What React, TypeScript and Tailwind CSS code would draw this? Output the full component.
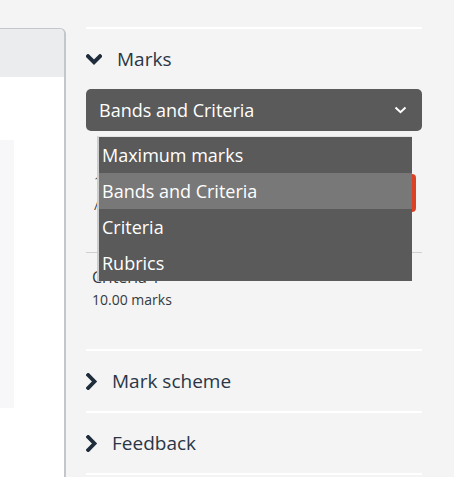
import React from "react";

const ChevronDown = () => (
  <svg width="16" height="11" viewBox="0 0 16 11" className="shrink-0">
    <polyline points="2,2.2 8,8.2 14,2.2" fill="none" stroke="#1e2c3c" strokeWidth="3.8" strokeLinecap="square" />
  </svg>
);

const ChevronRight = () => (
  <svg width="12" height="17" viewBox="0 0 12 17" className="shrink-0">
    <polyline points="2.2,2 8.5,8.5 2.2,15" fill="none" stroke="#1e2c3c" strokeWidth="3.8" strokeLinecap="square" />
  </svg>
);

const SmallChevron = () => (
  <svg width="13" height="8" viewBox="0 0 13 8">
    <polyline points="1.5,1.5 6.5,6.2 11.5,1.5" fill="none" stroke="#ffffff" strokeWidth="2" />
  </svg>
);

const options = ["Maximum marks", "Bands and Criteria", "Criteria", "Rubrics"];

export default function App() {
  return (
    <div
      className="w-[454px] h-[477px] bg-[#f4f4f4] flex overflow-hidden"
      style={{ fontFamily: '"Open Sans", "Noto Sans", sans-serif' }}
    >
      {/* Left panel */}
      <div className="w-[66px] shrink-0 pt-[28px] flex flex-col">
        <div className="flex-1 border-t border-r-2 border-[#c3c6ca] rounded-tr-[6px] bg-white overflow-hidden flex flex-col">
          <div className="h-[48px] bg-[#ebecee]" />
          <div className="mt-[63px] w-[14px] h-[268px] bg-[#f7f7f9]" />
        </div>
      </div>

      {/* Right column */}
      <div className="ml-[20px] w-[336px] shrink-0 flex flex-col">
        <div className="mt-[27px] h-[2px] bg-white" />
        <div className="h-[60px] flex items-center">
          <ChevronDown />
          <span className="ml-[15px] text-[19px] text-[#2a3646]">Marks</span>
        </div>

        <div className="relative">
          <div className="h-[42px] rounded-[5px] bg-[#5a5a5a] pl-[13px] pr-[15px] flex items-center justify-between text-white text-[18px]">
            <span>Bands and Criteria</span>
            <SmallChevron />
          </div>

          {/* content behind dropdown */}
          <div className="relative h-[122px] border-b border-[#cfcfcf]">
            <span className="absolute left-[8px] top-[41px] text-[13px] text-[#343a40]">1</span>
            <span className="absolute left-[8px] top-[65px] text-[13px] text-[#343a40]">/</span>
            <div className="absolute right-[6px] top-[43px] w-[90px] h-[38px] rounded-[4px] bg-[#dc4326]" />
          </div>
          <div className="pl-[6px] pt-[13px] text-[#343a40]">
            <div className="text-[16px] leading-[22px]">Criteria 1</div>
            <div className="text-[14px] leading-[20px] mt-[2px]">10.00 marks</div>
          </div>

          {/* open dropdown */}
          <div className="absolute left-[11px] top-[47px] w-[315px] bg-[#5a5a5a] border-l-2 border-l-[#cdcdcd] border-t border-t-[#e4e4e4] flex flex-col">
            {options.map((o, i) => (
              <div
                key={o}
                className={
                  i === 1
                    ? "h-[36px] flex items-center pl-[3px] text-[18px] text-white bg-[#787878]"
                    : "h-[36px] flex items-center pl-[3px] text-[18px] text-white"
                }
              >
                {o}
              </div>
            ))}
          </div>
        </div>

        <div className="mt-[39px] h-[2px] bg-white" />
        <div className="h-[60px] flex items-center">
          <ChevronRight />
          <span className="ml-[14px] text-[19px] text-[#2a3646]">Mark scheme</span>
        </div>
        <div className="h-[2px] bg-white" />
        <div className="h-[60px] flex items-center">
          <ChevronRight />
          <span className="ml-[14px] text-[19px] text-[#2a3646]">Feedback</span>
        </div>
        <div className="h-[2px] bg-white" />
      </div>
    </div>
  );
}
